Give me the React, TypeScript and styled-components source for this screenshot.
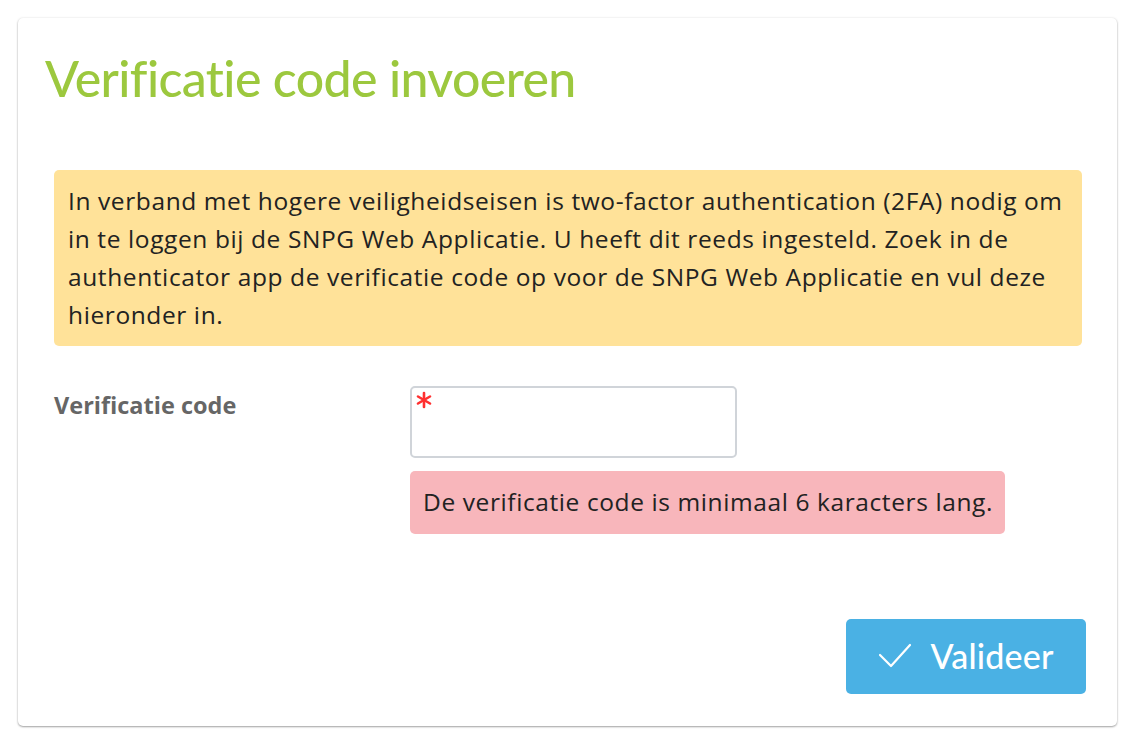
import React from 'react'
import styled, { createGlobalStyle } from 'styled-components'

const GlobalStyle = createGlobalStyle`
  html, body {
    margin: 0;
    padding: 0;
    background: #ffffff;
  }
  body {
    font-family: 'Open Sans', 'Noto Sans', sans-serif;
    color: #222222;
  }
`

const Page = styled.div`
  padding: 18px 23px 17px 18px;
`

const Card = styled.div`
  background: #ffffff;
  border-radius: 5px;
  box-shadow: 0 1px 2px rgba(0, 0, 0, 0.35), 0 0 3px rgba(0, 0, 0, 0.08);
  padding: 0 35px 32px 36px;
  display: flex;
  flex-direction: column;
`

const Title = styled.h1`
  margin: 30px 0 0 -9px;
  font-family: Lato, 'Liberation Sans', sans-serif;
  font-weight: 500;
  font-size: 50px;
  line-height: 60px;
  letter-spacing: -0.6px;
  color: #9cc83e;
`

const Alert = styled.div<{ $tone: 'warning' | 'danger' }>`
  background: ${(p) => (p.$tone === 'warning' ? '#ffe299' : '#f8b6bb')};
  border-radius: 5px;
  color: #222222;
  font-size: 24.5px;
  line-height: 38px;
  letter-spacing: 0.6px;
`

const Notice = styled(Alert)`
  margin-top: 62px;
  padding: 12px 8px 12px 14px;
`

const FormRow = styled.div`
  display: grid;
  grid-template-columns: 356px 1fr;
  margin-top: 40px;
`

const Label = styled.label`
  font-weight: 700;
  font-size: 23.5px;
  line-height: 38px;
  color: #666666;
`

const Field = styled.div`
  display: flex;
  flex-direction: column;
  align-items: flex-start;
  gap: 13px;
`

const InputBox = styled.div`
  position: relative;
  width: 327px;
  height: 72px;
  box-sizing: border-box;
  border: 2px solid #d0d4d9;
  border-radius: 5px;
`

const Input = styled.input`
  width: 100%;
  height: 100%;
  box-sizing: border-box;
  border: 0;
  outline: none;
  background: transparent;
  font-family: inherit;
  font-size: 24px;
  padding: 0 14px;
`

const Required = styled.svg`
  position: absolute;
  left: 2px;
  top: 2px;
`

const ErrorText = styled(Alert)`
  padding: 12px 12px 13px 13px;
`

const Footer = styled.div`
  display: flex;
  justify-content: flex-end;
  margin-top: 85px;
  margin-right: -4px;
`

const Button = styled.button`
  display: flex;
  align-items: center;
  justify-content: center;
  gap: 18px;
  width: 240px;
  height: 75px;
  border: 0;
  border-radius: 5px;
  background: #4ab1e4;
  color: #ffffff;
  font-family: Lato, 'Liberation Sans', sans-serif;
  font-weight: 500;
  font-size: 34px;
  letter-spacing: 0.2px;
  cursor: pointer;
  padding: 0 0 2px 0;
`

const CheckIcon = () => (
  <svg width="34" height="26" viewBox="0 0 34 26" fill="none">
    <path d="M2 12 L13 23 L32 2" stroke="#ffffff" strokeWidth="2.2" strokeLinecap="round" strokeLinejoin="round" />
  </svg>
)

const Asterisk = () => (
  <Required width="20" height="20" viewBox="0 0 20 20">
    <g stroke="#ff3030" strokeWidth="2.6" strokeLinecap="round">
      <line x1="10" y1="3" x2="10" y2="17" />
      <line x1="4" y1="6.5" x2="16" y2="13.5" />
      <line x1="4" y1="13.5" x2="16" y2="6.5" />
    </g>
  </Required>
)

export default function App() {
  return (
    <>
      <GlobalStyle />
      <Page>
        <Card>
          <Title>Verificatie code invoeren</Title>
          <Notice $tone="warning">
            In verband met hogere veiligheidseisen is two-factor authentication (2FA) nodig om in te
            loggen bij de SNPG Web Applicatie. U heeft dit reeds ingesteld. Zoek in de authenticator
            app de verificatie code op voor de SNPG Web Applicatie en vul deze hieronder in.
          </Notice>
          <FormRow>
            <Label htmlFor="code">Verificatie code</Label>
            <Field>
              <InputBox>
                <Asterisk />
                <Input id="code" type="text" />
              </InputBox>
              <ErrorText $tone="danger">De verificatie code is minimaal 6 karacters lang.</ErrorText>
            </Field>
          </FormRow>
          <Footer>
            <Button type="button">
              <CheckIcon />
              Valideer
            </Button>
          </Footer>
        </Card>
      </Page>
    </>
  )
}
